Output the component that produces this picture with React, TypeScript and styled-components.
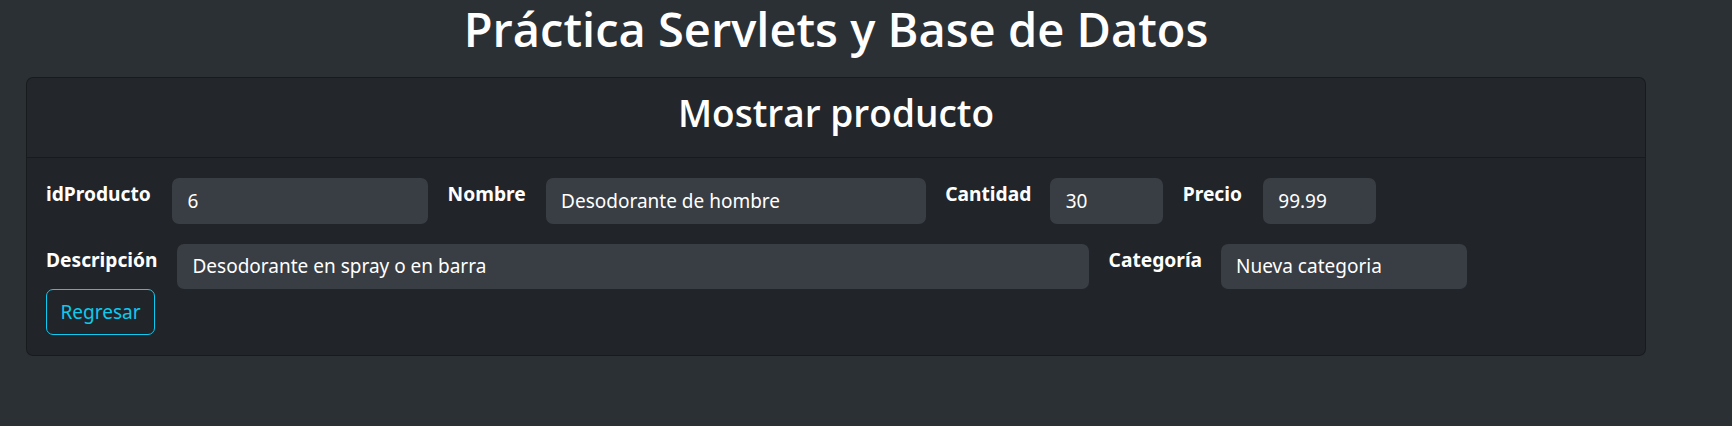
import React from "react";
import styled, { createGlobalStyle } from "styled-components";

const GlobalStyle = createGlobalStyle`
  html, body {
    margin: 0;
    padding: 0;
    background: #2b3035;
  }
  body {
    font-family: "Noto Sans", "Open Sans", sans-serif;
    color: #ffffff;
  }
  * { box-sizing: border-box; }
`;

const Page = styled.div`
  padding: 0 86px 0 26px;
`;

const Title = styled.h1`
  margin: 0 0 19px;
  text-align: center;
  font-family: "Open Sans", "Noto Sans", sans-serif;
  font-size: 47px;
  font-weight: 600;
  line-height: 58px;
  color: #ffffff;
`;

const Card = styled.section`
  background: #212529;
  border: 1px solid rgba(0, 0, 0, 0.25);
  border-radius: 7px;
  overflow: hidden;
`;

const CardHeader = styled.header`
  padding: 6px 19px 16px;
  border-bottom: 1px solid rgba(0, 0, 0, 0.3);
  background: rgba(255, 255, 255, 0.01);
`;

const CardTitle = styled.h2`
  margin: 0;
  text-align: center;
  font-family: "Open Sans", "Noto Sans", sans-serif;
  font-size: 37px;
  font-weight: 600;
  line-height: 57px;
  color: #ffffff;
`;

const CardBody = styled.div`
  padding: 20px 19px 20px;
  display: flex;
  flex-direction: column;
`;

const Row = styled.div<{ $gapAfter?: number }>`
  display: flex;
  align-items: flex-start;
  gap: 19.5px;
  margin-bottom: ${(p) => p.$gapAfter ?? 0}px;
`;

const Label = styled.label<{ $w: number }>`
  width: ${(p) => p.$w}px;
  flex: none;
  padding-top: 2px;
  font-size: 19.2px;
  font-weight: 700;
  line-height: 28.8px;
  color: #ffffff;
  white-space: nowrap;
`;

const Input = styled.input<{ $w: number }>`
  width: ${(p) => p.$w}px;
  flex: none;
  height: 45.6px;
  padding: 7.2px 14.4px;
  border: 1px solid transparent;
  border-radius: 7px;
  background: #393d44;
  color: #ffffff;
  font-family: "Noto Sans", "Open Sans", sans-serif;
  font-size: 19px;
  line-height: 28.8px;
  outline: none;
`;

const BackButton = styled.button`
  align-self: flex-start;
  width: 109px;
  height: 46px;
  padding: 0;
  border: 1.2px solid #0dcaf0;
  border-radius: 7px;
  background: transparent;
  color: #0dcaf0;
  font-family: "Noto Sans", "Open Sans", sans-serif;
  font-size: 19px;
  line-height: 28.8px;
  cursor: pointer;
`;

export default function App() {
  return (
    <>
      <GlobalStyle />
      <Page>
        <Title>Práctica Servlets y Base de Datos</Title>
        <Card>
          <CardHeader>
            <CardTitle>Mostrar producto</CardTitle>
          </CardHeader>
          <CardBody>
            <Row $gapAfter={20}>
              <Label $w={106.6}>idProducto</Label>
              <Input $w={256} readOnly value="6" />
              <Label $w={78.6}>Nombre</Label>
              <Input $w={380} readOnly value="Desodorante de hombre" />
              <Label $w={85.6}>Cantidad</Label>
              <Input $w={113} readOnly value="30" />
              <Label $w={60.6}>Precio</Label>
              <Input $w={113} readOnly value="99.99" />
            </Row>
            <Row>
              <Label $w={111.6}>Descripción</Label>
              <Input $w={912} readOnly value="Desodorante en spray o en barra" />
              <Label $w={92.6}>Categoría</Label>
              <Input $w={246} readOnly value="Nueva categoria" />
            </Row>
            <BackButton type="button">Regresar</BackButton>
          </CardBody>
        </Card>
      </Page>
    </>
  );
}
